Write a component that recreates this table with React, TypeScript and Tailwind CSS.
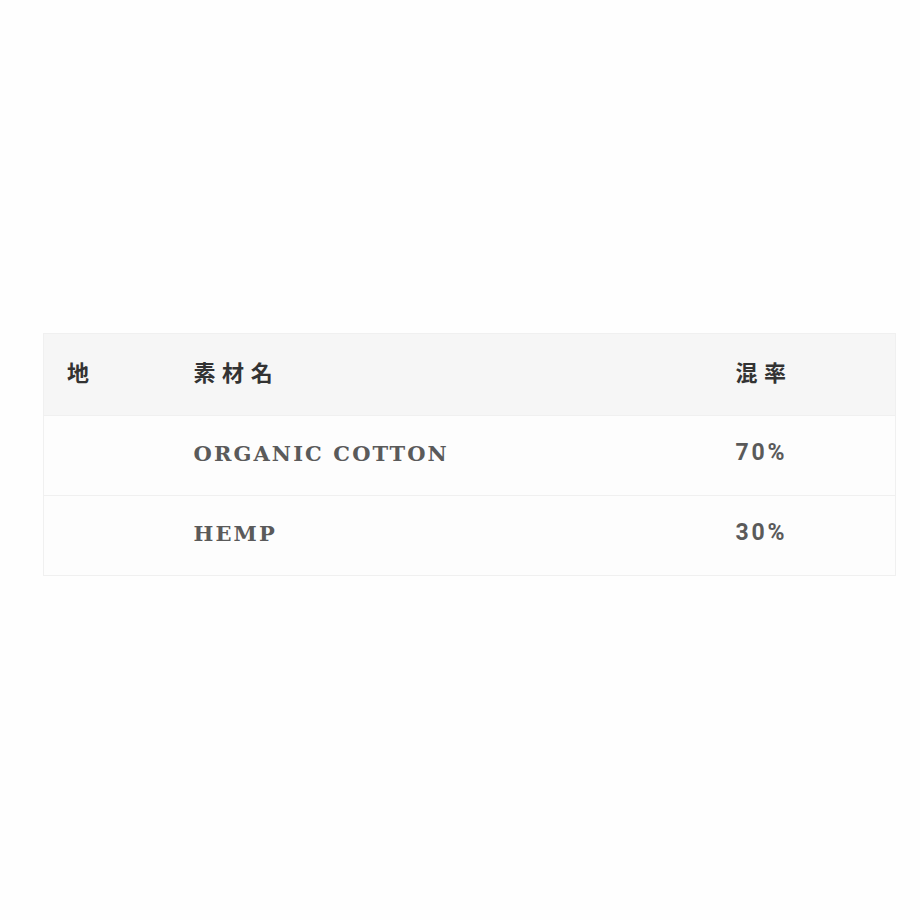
import React from "react";

const rows = [
  { name: "ORGANIC COTTON", rate: "70%" },
  { name: "HEMP", rate: "30%" },
];

export default function App() {
  return (
    <div className="w-[920px] h-[920px] bg-[#fefefe] pt-[333px] pl-[43px]">
      <table className="w-[853px] border-collapse border border-[#f0f0f0]">
        <thead>
          <tr className="h-[82px] bg-[#f6f6f6]">
            <th className="w-[150px] pl-[23px] pb-[7px] text-left align-middle text-[22px] font-bold text-[#333] tracking-[0.3em] font-['Noto_Sans_CJK_JP',sans-serif]">地</th>
            <th className="w-[542px] pb-[7px] text-left align-middle text-[22px] font-bold text-[#333] tracking-[0.3em] font-['Noto_Sans_CJK_JP',sans-serif]">素材名</th>
            <th className="pb-[7px] text-left align-middle text-[22px] font-bold text-[#333] tracking-[0.3em] font-['Noto_Sans_CJK_JP',sans-serif]">混率</th>
          </tr>
        </thead>
        <tbody>
          {rows.map((r) => (
            <tr key={r.name} className="h-[80px] bg-[#fdfdfd] border-t border-[#f0f0f0]">
              <td></td>
              <td className="pb-[4px] align-middle text-[21px] font-bold text-[#5a5a5a] tracking-[0.1em] font-['DejaVu_Serif',serif]">{r.name}</td>
              <td className="pb-[4px] align-middle text-[23px] font-bold text-[#5a5a5a] tracking-[0.12em] font-['Roboto',sans-serif]">{r.rate}</td>
            </tr>
          ))}
        </tbody>
      </table>
    </div>
  );
}
